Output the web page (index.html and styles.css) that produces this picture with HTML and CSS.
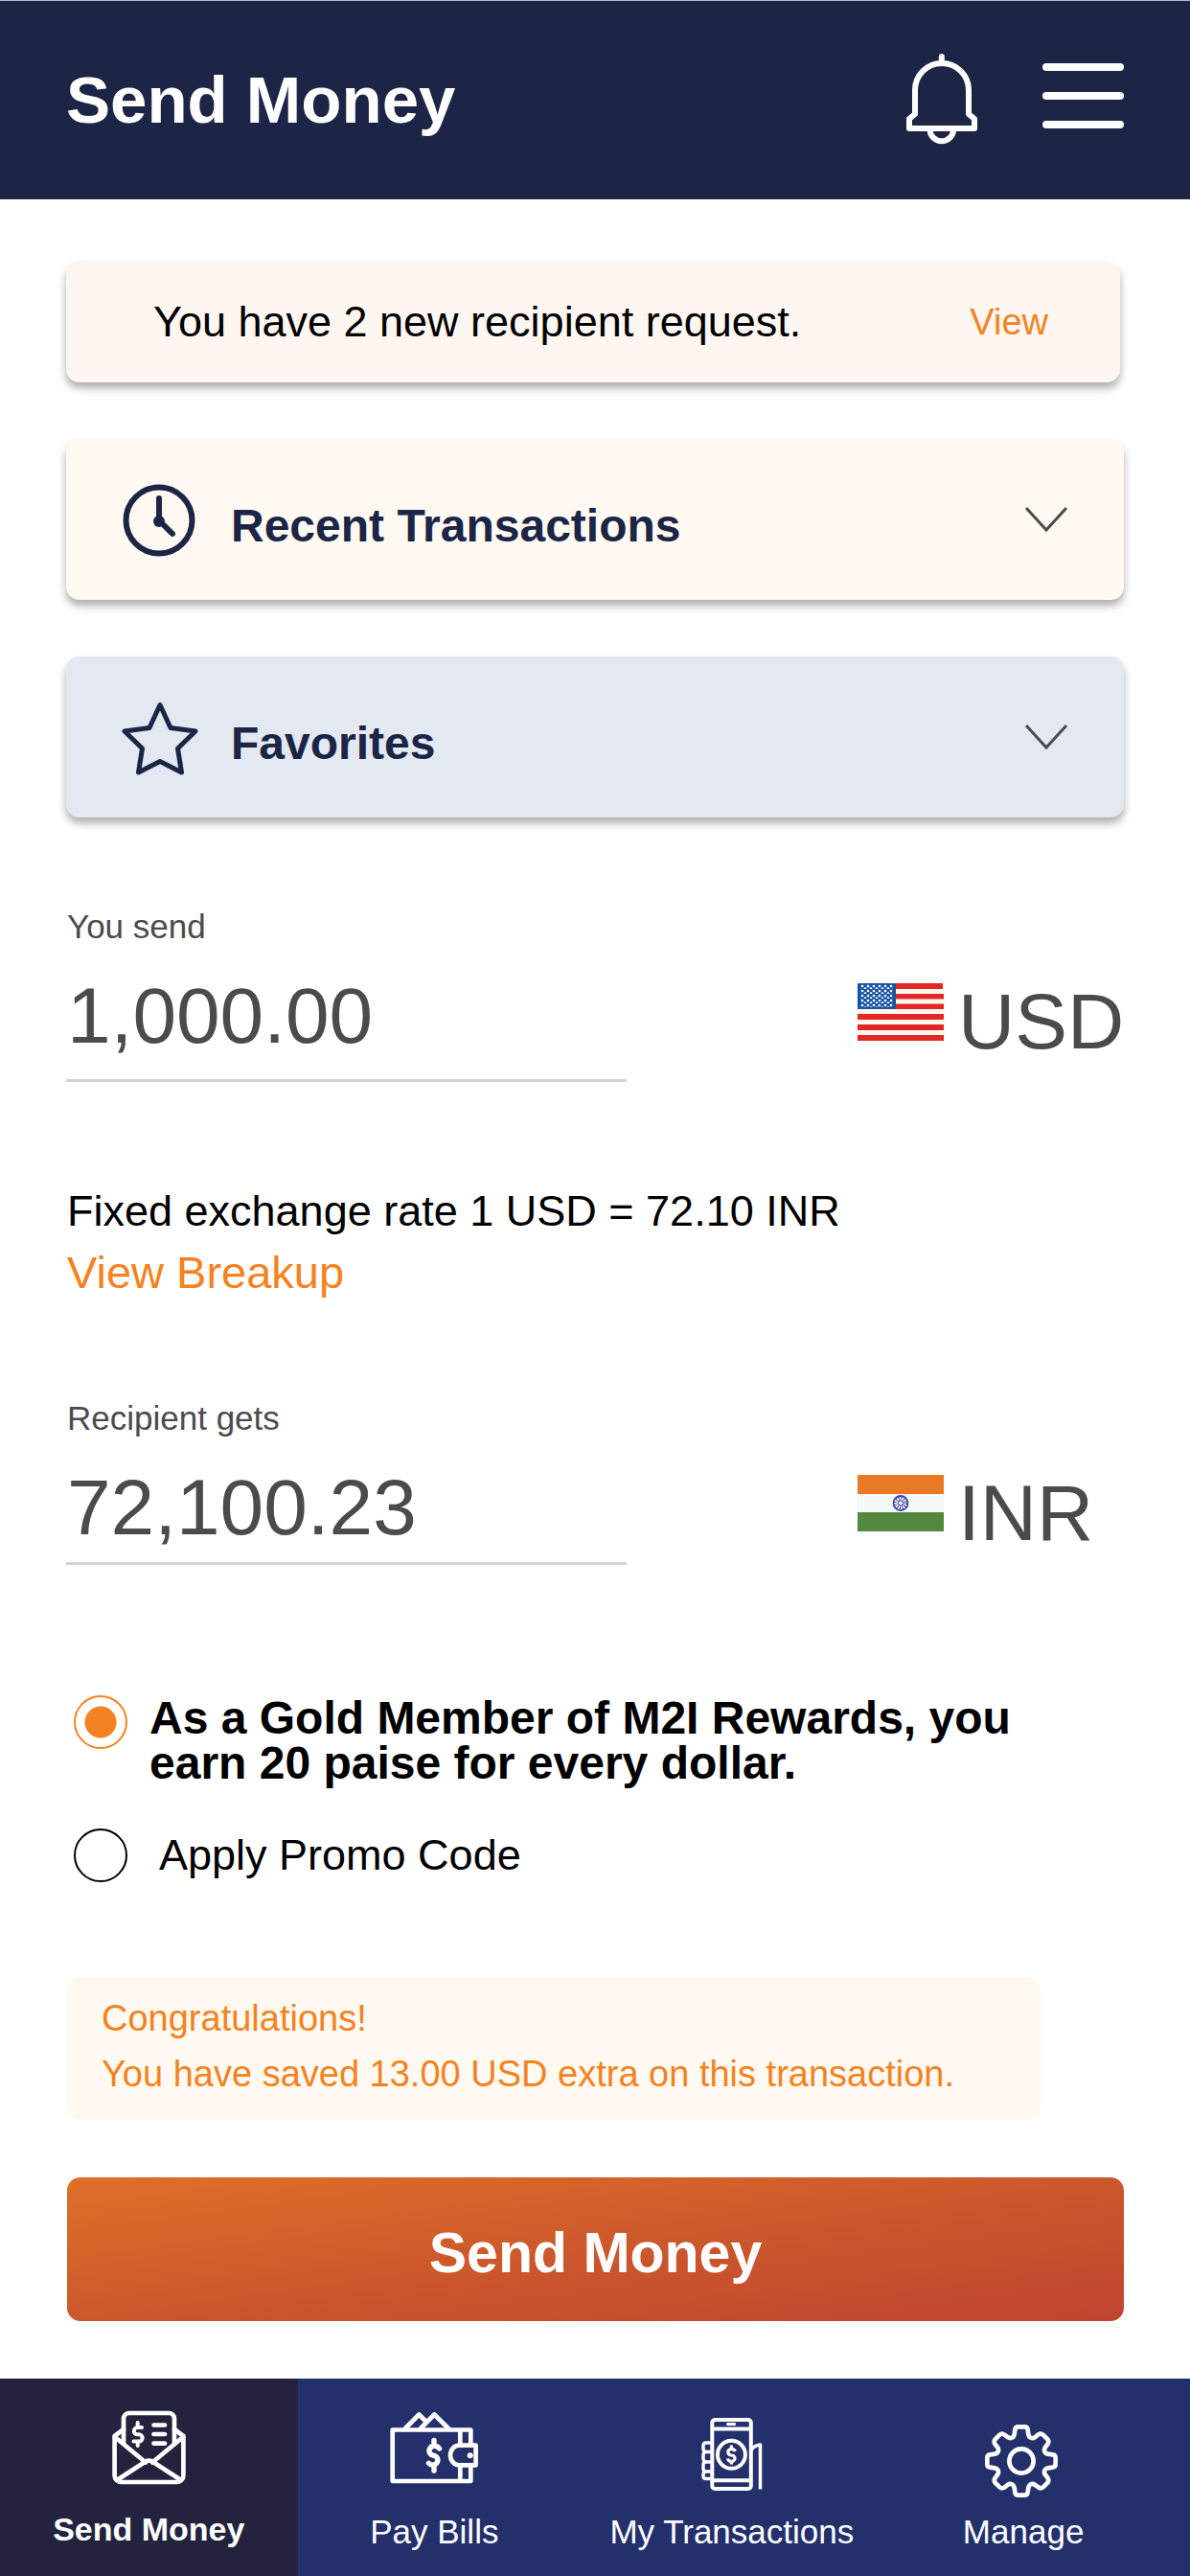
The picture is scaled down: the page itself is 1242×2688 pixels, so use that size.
FILE: index.html
```html
<!DOCTYPE html>
<html lang="en">
<head>
<meta charset="utf-8">
<meta name="viewport" content="width=device-width, initial-scale=1">
<title>Send Money</title>
<link rel="stylesheet" href="styles.css">
</head>
<body>
<header class="header">
  <h1 class="header__title">Send Money</h1>
  <button class="icon-button" type="button" aria-label="Notifications">
    <svg width="74" height="94" viewBox="0 1 74 94" fill="none" stroke="#fff" stroke-width="6" stroke-linejoin="round" stroke-linecap="round">
      <path d="M3 77V67L9 62V37a28 28 0 0 1 56 0v25l6 5v10z"/>
      <path d="M24.5 78a12.3 12.3 0 0 0 24.6 0" stroke-linecap="butt"/>
      <path d="M36.8 2v7"/>
    </svg>
  </button>
  <button class="icon-button" type="button" aria-label="Menu">
    <svg width="86" height="94" viewBox="0 1 86 94" fill="none" stroke="#fff" stroke-width="8" stroke-linecap="round">
      <path d="M5 13h77M5 43h77M5 73h77"/>
    </svg>
  </button>
</header>

<main class="main">
  <div class="panels">
    <div class="notice">
      <span>You have 2 new recipient request.</span>
      <a class="notice__link" href="#requests">View</a>
    </div>
    <button class="panel panel--cream" type="button" aria-expanded="false">
      <svg width="80" height="92" viewBox="0 0 80 92" fill="none" stroke="#1b2545" stroke-width="6" stroke-linecap="round">
        <circle cx="39" cy="40" r="34.500"/>
        <path d="M39 40V17M39 40l14 14"/>
        <circle cx="39" cy="41" r="6" fill="#1b2545" stroke="none"/>
      </svg>
      <span class="panel__title">Recent Transactions</span>
      <svg width="46" height="92" viewBox="0 0 46 92" fill="none" stroke="#4b4b4b" stroke-width="3"><path d="M2 27l21 23 21-23"/></svg>
    </button>
    <button class="panel panel--blue" type="button" aria-expanded="false">
      <svg width="80" height="92" viewBox="0 0 80 92" fill="none" stroke="#1b2545" stroke-width="5" stroke-linejoin="round">
        <path d="M40 5.500l11 24 26 3.500-18.500 18 4 25L40 64.500 17.500 76l4-25L3 33l26-3.500z"/>
      </svg>
      <span class="panel__title">Favorites</span>
      <svg width="46" height="92" viewBox="0 0 46 92" fill="none" stroke="#4b4b4b" stroke-width="3"><path d="M2 27l21 23 21-23"/></svg>
    </button>
  </div>

  <form class="form">
    <div class="field">
      <label class="field__label" for="send">You send</label>
      <div class="field__row">
        <input class="field__input" id="send" type="text" inputmode="decimal" value="1,000.00">
        <div class="currency">
          <svg class="currency__flag" width="90" height="60" viewBox="0 0 90 60">
            <defs>
              <pattern id="stars" width="6" height="5" patternUnits="userSpaceOnUse" x="2" y="1">
                <circle cx="3" cy="2" r="1.300" fill="#fff"/>
                <circle cx="0" cy="4.500" r="1.300" fill="#fff"/>
                <circle cx="6" cy="4.500" r="1.300" fill="#fff"/>
              </pattern>
            </defs>
            <rect width="90" height="60" rx="2" fill="#fff8ef"/>
            <path d="M1 0h88v6H1zM0 11h90v5.500H0zM0 21.500h90V27H0zM0 32h90v6H0zM0 43h90v6H0zM0 54h90v6H0z" fill="#e22726"/>
            <rect width="40" height="27" rx="1" fill="#1655a3"/>
            <rect x="3" y="1" width="34" height="24" fill="url(#stars)"/>
          </svg>
          <span>USD</span>
        </div>
      </div>
    </div>

    <div class="rate">
      <p class="rate__text">Fixed exchange rate 1 USD = 72.10 INR</p>
      <a class="rate__link" href="#breakup">View Breakup</a>
    </div>

    <div class="field">
      <label class="field__label" for="gets">Recipient gets</label>
      <div class="field__row">
        <input class="field__input field__input--result" id="gets" type="text" inputmode="decimal" value="72,100.23">
        <div class="currency">
          <svg class="currency__flag" width="90" height="60" viewBox="0 0 90 60">
            <path d="M0 0h90v20H0z" fill="#e87a26"/>
            <path d="M0 20h90v19H0z" fill="#f5f9f8"/>
            <path d="M0 39h90v20H0z" fill="#53893e"/>
            <g fill="none" stroke="#3f47a5">
              <circle cx="45" cy="29.500" r="7.500" stroke-width="1.800"/>
              <circle cx="45" cy="29.500" r="5" stroke-width="5" stroke-dasharray="1 1.600"/>
              <circle cx="45" cy="29.500" r="2.500"/>
            </g>
          </svg>
          <span>INR</span>
        </div>
      </div>
    </div>

    <div class="offers" role="radiogroup" aria-label="Offers">
      <div class="offer offer--member">
        <input class="radio" type="radio" name="offer" id="gold" checked>
        <label for="gold">As a Gold Member of M2I Rewards, you earn 20 paise for every dollar.</label>
      </div>
      <div class="offer offer--promo">
        <input class="radio" type="radio" name="offer" id="promo">
        <label for="promo">Apply Promo Code</label>
      </div>
    </div>

    <div class="saved">
      <p>Congratulations!</p>
      <p>You have saved 13.00 USD extra on this transaction.</p>
    </div>

    <button class="submit" type="submit">Send Money</button>
  </form>
</main>

<nav class="nav">
  <a class="nav__item nav__item--active" href="#send-money" aria-current="page">
    <svg width="100" height="100" viewBox="0 0 100 100" fill="none" stroke="#fff" stroke-width="4.700" stroke-linejoin="round" stroke-linecap="round">
      <path d="M24 40V14a6 6 0 0 1 6-6h41a6 6 0 0 1 6 6v26"/>
      <path d="M24 25l-9.400 7V73a7 7 0 0 0 7 7h57.800a7 7 0 0 0 7-7V32L77 25"/>
      <path d="M15 33l32 26.500M86 33L54 59.500M17 78l30-19.500q3.500-2 7 0L84 78"/>
      <path d="M55.500 20.500H67M55.500 30H67M55.500 39.700H67"/>
      <path d="M43 23h-4.500a3.600 3.600 0 0 0 0 7.300h1.500a3.600 3.600 0 0 1 0 7.300h-5.500M38.700 18v5M38.700 38v4" stroke-width="4"/>
    </svg>
    <span>Send Money</span>
  </a>
  <a class="nav__item" href="#pay-bills">
    <svg width="100" height="100" viewBox="0 0 100 100" fill="none" stroke="#fff" stroke-width="4.700" stroke-linejoin="round" stroke-linecap="round">
      <path d="M20 24L34.300 9.500l7.500 7.500M36 24L50.300 9.500 65 24"/>
      <path d="M6.700 25.500h81.600V79H6.700zM77.300 25.500V79"/>
      <path d="M93.600 41.700v20.600H76.500a9.500 10.300 0 0 1 0-20.600z" fill="#24306b"/>
      <circle cx="87.700" cy="52.300" r="3" fill="#fff" stroke="none"/>
      <path d="M55.500 45a5.600 5 0 1 0-5.500 7.300 5.300 5 0 1 1-5.500 8M50 36.500v5M50 63v5" stroke-width="5.400"/>
    </svg>
    <span>Pay Bills</span>
  </a>
  <a class="nav__item" href="#transactions">
    <svg width="100" height="100" viewBox="0 0 100 100" fill="none" stroke="#fff" stroke-width="4" stroke-linejoin="round">
      <rect x="29.300" y="15" width="40.500" height="72" rx="3"/>
      <path d="M29.300 24.500h40.500M29.300 78.300h40.500"/>
      <path d="M44.300 19.500h9.500" stroke-width="3"/>
      <circle cx="49.400" cy="51.300" r="14.500"/>
      <path d="M53.300 48a3.800 3.200 0 1 0-3.900 4 3.800 3.200 0 1 1-3.900 3.500M49.400 41.500v4M49.400 57.500v4" stroke-width="3.200"/>
      <path d="M29 39h-6q-3 0-3 3v3q0 3 3 3.500h6M23 48.500q-3 0-3 3v4q0 3 3 3.500h6M23 59q-3 0-3 3v4q0 3 3 3h6M23 69q-3 0-3 3v1.500q0 3 3 3h6" stroke-width="3.400"/>
      <path d="M70 47q3-5.500 9.500-6v46.500" stroke-width="3.500"/>
    </svg>
    <span>My Transactions</span>
  </a>
  <a class="nav__item" href="#manage">
    <svg width="100" height="100" viewBox="24 0 300 300" fill="none" stroke="#fff" stroke-width="14">
      <defs><path id="cog" d="M168 67H178Q187 67 188 76L190 91Q191 98 197 101Q204 104 210 100L220 92Q229 86 236 92L250 106Q256 113 250 121L243 131Q238 138 241 145Q244 151 251 152L266 154Q275 155 275 164V174"/></defs>
      <use href="#cog"/>
      <use href="#cog" transform="rotate(90 168 174)"/>
      <use href="#cog" transform="rotate(180 168 174)"/>
      <use href="#cog" transform="rotate(270 168 174)"/>
      <circle cx="168" cy="174" r="38"/>
    </svg>
    <span>Manage</span>
  </a>
</nav>
</body>
</html>
```
FILE: styles.css
```css
* {
  box-sizing: border-box;
}

body {
  margin: 0;
  min-height: 100vh;
  display: flex;
  flex-direction: column;
  background: #fff;
  color: #000;
  font-family: "Liberation Sans", Arial, sans-serif;
}

button,
input {
  font: inherit;
  color: inherit;
}

button {
  border: 0;
  padding: 0;
  cursor: pointer;
}

p,
h1 {
  margin: 0;
}

a {
  text-decoration: none;
}

svg {
  display: block;
  flex: none;
  overflow: visible;
}

.header {
  display: flex;
  align-items: center;
  gap: 67px;
  min-height: 208px;
  padding: 0 69px;
  border-top: 1px solid #b4bac6;
  background: #1c2545;
  color: #fff;
}

.header__title {
  flex: 1;
  font-size: 69px;
  line-height: 80px;
}

.icon-button {
  background: none;
}

.main {
  flex: 1;
  padding: 65px 69px 60px;
}

.panels {
  display: flex;
  flex-direction: column;
  gap: 59px;
}

.notice,
.panel {
  display: flex;
  align-items: center;
  border-radius: 14px;
  box-shadow: 0 6px 9px rgba(0, 0, 0, 0.32);
}

.notice {
  justify-content: space-between;
  min-height: 126px;
  margin-right: 4px;
  padding: 0 75px 0 91px;
  background: #fef6f1;
  font-size: 45px;
  line-height: 54px;
}

.notice__link {
  color: #f58220;
  font-size: 38px;
}

.panel {
  gap: 34px;
  min-height: 168px;
  padding: 14px 58px 0;
  color: #1b2545;
  font-size: 48px;
  font-weight: 700;
  line-height: 54px;
  text-align: left;
}

.panel--cream {
  background: #fff9f2;
}

.panel--blue {
  background: #e4e8f1;
}

.panel__title {
  flex: 1;
}

.form {
  display: flex;
  flex-direction: column;
  margin-top: 94px;
}

.field {
  display: flex;
  flex-direction: column;
  gap: 25px;
  color: #4b4b4b;
}

.field__label {
  padding-left: 1px;
  font-size: 35px;
  line-height: 40px;
}

.field__row {
  display: flex;
  align-items: flex-start;
  justify-content: space-between;
}

.field__input {
  width: 53%;
  height: 117px;
  padding: 0 0 18px 1px;
  border: 0;
  border-bottom: 3px solid #d4d4d4;
  border-radius: 0;
  background: none;
  font-size: 82px;
  line-height: 96px;
}

.field__input--result {
  height: 108px;
  padding-bottom: 9px;
}

.currency {
  display: flex;
  align-items: center;
  gap: 15px;
  width: 278px;
  padding-top: 6px;
  font-size: 82px;
  line-height: 96px;
}

.currency__flag {
  margin-bottom: 20px;
}

.rate {
  display: flex;
  flex-direction: column;
  align-items: flex-start;
  gap: 10px;
  margin: 108px 0 105px;
  padding-left: 1px;
  line-height: 54px;
}

.rate__text {
  font-size: 45px;
}

.rate__link {
  color: #f58220;
  font-size: 47px;
}

.offers {
  display: flex;
  flex-direction: column;
  gap: 45px;
  margin: 136px 0 99px;
  padding-left: 8px;
}

.offer {
  display: flex;
}

.offer--member {
  gap: 23px;
  max-width: 1000px;
  font-size: 48px;
  font-weight: 700;
  line-height: 47px;
}

.offer--promo {
  align-items: center;
  gap: 33px;
  font-size: 45px;
  line-height: 54px;
}

.radio {
  appearance: none;
  flex: none;
  width: 56px;
  height: 56px;
  margin: 0;
  border: 2px solid #000;
  border-radius: 50%;
  background: #fff;
}

.radio:checked {
  border-color: #f58220;
  background: radial-gradient(circle, #f58220 16px, #fff 17px);
}

.saved {
  width: 92%;
  margin-left: 1px;
  padding: 14px 36px 19px;
  border-radius: 14px;
  background: #fff9f2;
  color: #f58220;
  font-size: 38px;
  line-height: 58px;
}

.submit {
  min-height: 150px;
  margin-top: 60px;
  margin-left: 1px;
  padding-top: 8px;
  border-radius: 14px;
  background: linear-gradient(to bottom right, #df7028, #cb572c 52%, #bf442f);
  color: #fff;
  font-size: 59px;
  font-weight: 700;
  line-height: 68px;
}

.nav {
  display: grid;
  grid-template-columns: 25% 23% 27% 22%;
  min-height: 206px;
  background: #24306b;
}

.nav__item {
  display: flex;
  flex-direction: column;
  align-items: center;
  gap: 12px;
  padding-top: 28px;
  color: #fff;
  font-size: 35px;
  line-height: 40px;
}

.nav__item--active {
  gap: 9px;
  background: #23233f;
  font-size: 34px;
  font-weight: 700;
}
```
